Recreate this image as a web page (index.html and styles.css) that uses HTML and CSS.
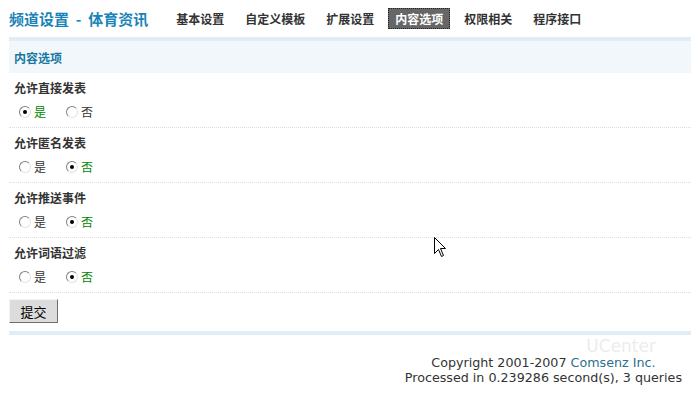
FILE: index.html
```html
<!DOCTYPE html>
<html lang="zh-CN">
<head>
  <meta charset="UTF-8">
  <title>频道设置 - 体育资讯</title>
  <link rel="stylesheet" href="styles.css">
</head>
<body>
  <div class="header">
    <h1 class="title">频道设置&nbsp; -&nbsp; 体育资讯</h1>
    <ul class="nav">
      <li><a href="#">基本设置</a></li>
      <li><a href="#">自定义模板</a></li>
      <li><a href="#">扩展设置</a></li>
      <li><a href="#" class="active">内容选项</a></li>
      <li><a href="#">权限相关</a></li>
      <li><a href="#">程序接口</a></li>
    </ul>
  </div>

  <form class="main">
    <div class="band"><h2>内容选项</h2></div>

    <div class="row">
      <div class="label">允许直接发表</div>
      <div class="opts">
        <label class="on"><input type="radio" name="direct" checked> 是</label>
        <label><input type="radio" name="direct"> 否</label>
      </div>
    </div>

    <div class="row">
      <div class="label">允许匿名发表</div>
      <div class="opts">
        <label><input type="radio" name="anon"> 是</label>
        <label class="on"><input type="radio" name="anon" checked> 否</label>
      </div>
    </div>

    <div class="row">
      <div class="label">允许推送事件</div>
      <div class="opts">
        <label><input type="radio" name="feed"> 是</label>
        <label class="on"><input type="radio" name="feed" checked> 否</label>
      </div>
    </div>

    <div class="row">
      <div class="label">允许词语过滤</div>
      <div class="opts">
        <label><input type="radio" name="filter"> 是</label>
        <label class="on"><input type="radio" name="filter" checked> 否</label>
      </div>
    </div>

    <button type="button" class="submit">提交</button>
    <div class="bar"></div>
  </form>

  <div class="footer">
    <div class="copy">
      <span class="mark">UCenter</span>
      <p>Copyright 2001-2007 <a href="#">Comsenz Inc.</a></p>
      <p>Processed in 0.239286 second(s), 3 queries</p>
    </div>
  </div>

  <svg class="cursor" width="13" height="21" viewBox="0 0 13 21">
    <path d="M0.5 0.5 L0.5 16.5 L4.5 12.5 L7.5 19.5 L9.5 18.5 L6.5 11.5 L11.5 11.5 Z" fill="#fff" stroke="#000" stroke-width="1"/>
  </svg>
</body>
</html>
```

FILE: styles.css
```css
body {
  margin: 0;
  background: #fff;
  color: #333;
  font-family: "Noto Sans CJK SC", sans-serif;
  font-size: 12px;
  position: relative;
  height: 395px;
  overflow: hidden;
}
.header {
  display: flex;
  align-items: center;
  height: 37px;
  padding-left: 9px;
}
.title {
  margin: 0 21px 0 0;
  font-size: 15px;
  line-height: 20px;
  font-weight: bold;
  color: #1a84b8;
}
.nav {
  display: flex;
  gap: 7px;
  list-style: none;
  margin: 0;
  padding: 0;
}
.nav a {
  display: block;
  padding: 1px 6px;
  line-height: 17px;
  border: 1px dotted transparent;
  color: #333;
  font-weight: bold;
  text-decoration: none;
}
.nav a.active {
  background: #666;
  color: #fff;
  border-color: #222;
}
.main {
  margin: 0 0 0 9px;
}
.band {
  height: 32px;
  border-top: 4px solid #e1ecf5;
  background: #f2f7fc;
  display: flex;
  align-items: center;
  padding-left: 5px;
}
.band h2 {
  margin: 0;
  font-size: 12px;
  color: #16789f;
  font-weight: bold;
}
.row {
  padding: 7px 0 7px 0;
  border-bottom: 1px dotted #ddd;
}
.label {
  line-height: 16px;
  padding-left: 5px;
  font-weight: bold;
  color: #333;
}
.opts {
  display: flex;
  gap: 20px;
  margin-top: 8px;
  line-height: 16px;
  padding-left: 10px;
}
.opts label {
  display: flex;
  align-items: center;
  gap: 3px;
  color: #333;
}
.opts label.on {
  color: #080;
}
.opts input {
  appearance: none;
  -webkit-appearance: none;
  width: 12px;
  height: 12px;
  margin: 0;
  border-radius: 50%;
  border: 1px solid;
  border-color: #808080 #e4e4e4 #e4e4e4 #808080;
  background: #fff;
  position: relative;
}
.opts input:checked::after {
  content: "";
  position: absolute;
  left: 3px;
  top: 3px;
  width: 4px;
  height: 4px;
  border-radius: 50%;
  background: #000;
}
.submit {
  display: block;
  margin-top: 6px;
  width: 49px;
  height: 24px;
  padding: 0;
  font-family: "Noto Sans CJK SC", sans-serif;
  font-size: 13px;
  color: #000;
  background: #dcdcdc;
  border: 1px solid;
  border-color: #f4f4f4 #6e6e6e #6e6e6e #f4f4f4;
}
.bar {
  margin-top: 8px;
  height: 4px;
  background: #e3edf6;
}
.footer {
  display: flex;
  justify-content: flex-end;
  margin-top: 20px;
  padding-right: 9px;
  font-family: "DejaVu Sans", sans-serif;
  font-size: 12.7px;
  line-height: 15px;
  color: #333;
}
.copy {
  position: relative;
  text-align: center;
}
.copy p {
  margin: 0;
  position: relative;
}
.copy a {
  color: #2a6f8c;
  text-decoration: none;
}
.mark {
  position: absolute;
  right: 26px;
  top: -16px;
  font-size: 17px;
  line-height: 15px;
  color: #ececec;
}
.cursor {
  position: absolute;
  left: 434px;
  top: 237px;
}
```
